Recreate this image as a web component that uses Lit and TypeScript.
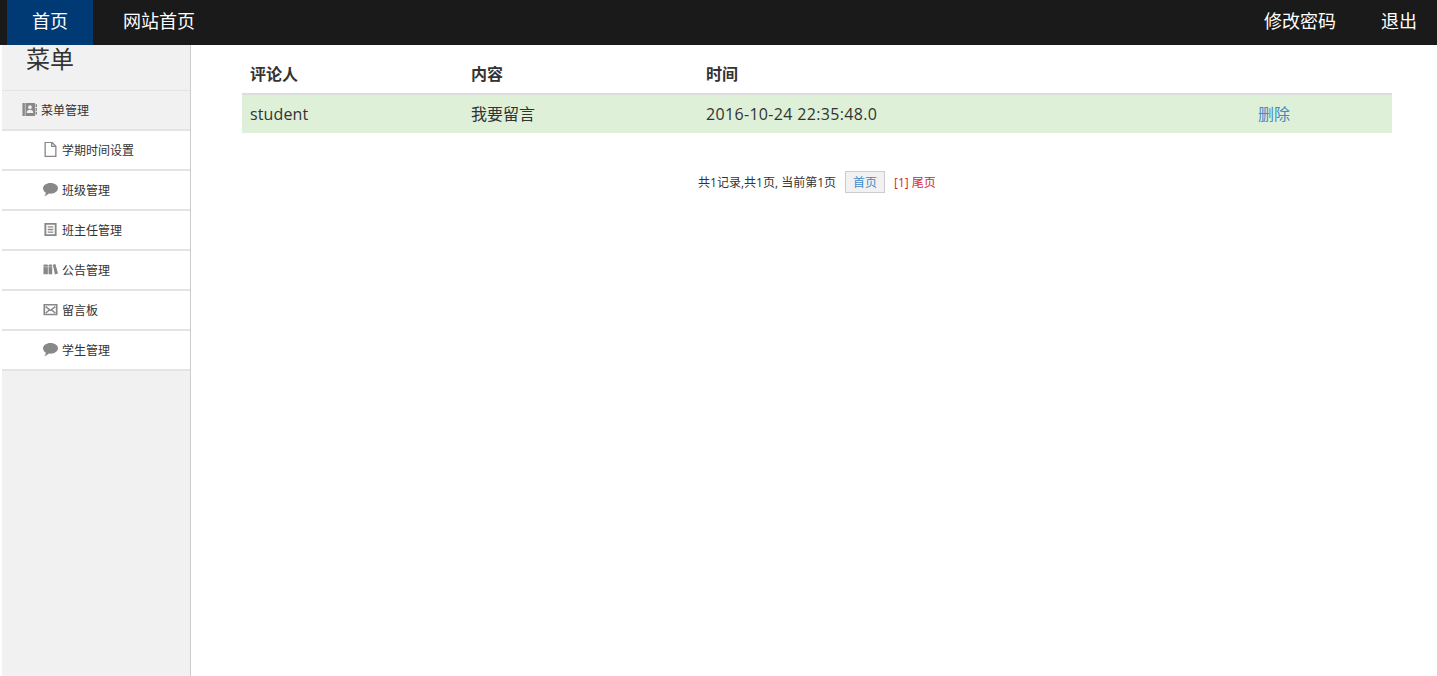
import { LitElement, html, css, svg } from "lit";
import { customElement } from "lit/decorators.js";

const icons: Record<string, unknown> = {
  contact: svg`<path fill-rule="evenodd" d="M.5 1h12.700a.8.8 0 0 1 .8.8v12.400a.8.8 0 0 1-.8.8H.5zM8.500 3.500a2 2 0 1 0 0 4 2 2 0 0 0 0-4zM5 11.800h7c0-2.300-1.400-3.500-3.500-3.500S5 9.500 5 11.800z"/><path fill="#d8d8d8" d="M3 1h.8v14H3z"/><path d="M14.500 2.500H16v2.700h-1.500zM14.500 6.500H16v2.700h-1.500zM14.500 10.500H16v2.700h-1.500z"/>`,
  file: svg`<path d="M2.300.3h7.200l4.200 4.200v10.900H2.300z M9.300.3v4.400h4.400" fill="none" stroke="currentColor" stroke-width="1.400"/>`,
  comment: svg`<path d="M8 1c4.400 0 8 2.500 8 5.700S12.400 12.400 8 12.400c-.6 0-1.200 0-1.700-.1C5.100 13.600 3.400 14.600 1.400 15c1-1.100 1.600-2.200 1.700-3.500C1.200 10.400 0 8.700 0 6.700 0 3.500 3.600 1 8 1z"/>`,
  list: svg`<path fill-rule="evenodd" d="M1.500 1h13v14h-13zM3.500 3v10h9V3zM5 4.500h6v1.400H5zM5 7.300h6v1.400H5zM5 10.100h6v1.400H5z"/>`,
  books: svg`<path d="M.5 3.500c0-.5.4-.8 1-.8h2.800c.6 0 .9.300.9.800V13H.5zM5.900 3.500c0-.5.4-.8 1-.8h2c.6 0 .9.300.9.800V13H5.900zM10.500 3l2.700-.8L16 12.200l-3.300 1z"/><path fill="#fff" opacity=".55" d="M.5 4.800h4.700v.8H.5zM5.900 4.800h3.900v.8H5.900z"/>`,
  mail: svg`<path fill-rule="evenodd" d="M.5 2h15v12.200H.5zM2.300 3.800v8.600h11.400V3.800zM3.400 4.300 8 7.900l4.600-3.600 1 1.200-3.500 2.700 3.500 2.900-1 1.200L8.900 9.200 8 9.900l-.9-.7-3.700 3.100-1-1.200 3.500-2.900-3.500-2.700z"/>`,
};

const menu = [
  ["file", "学期时间设置"],
  ["comment", "班级管理"],
  ["list", "班主任管理"],
  ["books", "公告管理"],
  ["mail", "留言板"],
  ["comment", "学生管理"],
];

@customElement("app-root")
export class AppRoot extends LitElement {
  static styles = css`
    :host {
      display: flex;
      flex-direction: column;
      height: 676px;
      overflow: hidden;
      background: #fff;
      color: #333;
      font-family: "Open Sans", "Noto Sans CJK SC", sans-serif;
      font-size: 16px;
    }
    .nav {
      flex: none;
      height: 45px;
      display: flex;
      align-items: stretch;
      justify-content: space-between;
      background: #1a1a1a;
      color: #fff;
      font-size: 18px;
      line-height: 43px;
      padding: 0 20px 0 7px;
    }
    .nav-group {
      display: flex;
    }
    .home {
      width: 86px;
      text-align: center;
      background: #003a75;
    }
    .site {
      margin-left: 30px;
    }
    .right {
      gap: 45px;
    }
    .body {
      flex: 1;
      display: flex;
      min-height: 0;
    }
    .side {
      flex: none;
      width: 188px;
      margin-left: 2px;
      background: #f1f1f1;
      border-right: 1px solid #ccc;
    }
    .title {
      height: 46px;
      box-sizing: border-box;
      padding-left: 24px;
      font-size: 24px;
      line-height: 28px;
      border-bottom: 1px solid #e4e4e4;
    }
    .group,
    .item {
      display: flex;
      align-items: center;
      font-size: 12px;
      color: #333;
      box-sizing: border-box;
      border-bottom: 2px solid #e4e4e4;
      height: 40px;
      gap: 4px;
    }
    .group {
      padding-left: 20px;
    }
    .item {
      background: #fff;
      padding-left: 41px;
    }
    .icon {
      width: 15px;
      height: 15px;
      flex: none;
      fill: #888;
      color: #888;
      margin-bottom: 1px;
    }
    .main {
      flex: 1;
      min-width: 0;
      padding: 10px 0 0 51px;
    }
    .table {
      width: 1150px;
    }
    .row {
      display: grid;
      grid-template-columns: 221px 235px 552px 1fr;
      padding-left: 8px;
      box-sizing: border-box;
      align-items: center;
    }
    .head {
      height: 40px;
      padding-bottom: 2px;
      font-weight: 700;
      border-bottom: 2px solid #ddd;
    }
    .data {
      height: 38px;
      background: #dff0d8;
    }
    .name {
      letter-spacing: 0.14px;
    }
    .date {
      letter-spacing: 0.33px;
    }
    .cjk {
      padding-bottom: 2px;
    }
    .link {
      color: #428bca;
    }
    .pager {
      display: flex;
      align-items: center;
      justify-content: center;
      margin-top: 38px;
      margin-right: 45px;
      font-size: 12px;
      height: 22px;
    }
    .first {
      margin: 0 9px;
      width: 40px;
      height: 22px;
      box-sizing: border-box;
      display: flex;
      align-items: center;
      justify-content: center;
      border: 1px solid #ccc;
      background: #f1f1f1;
      color: #428bca;
    }
    .red {
      color: #d9232e;
    }
  `;

  private icon(name: string) {
    return html`<svg class="icon" viewBox="0 0 16 16">${icons[name]}</svg>`;
  }

  render() {
    return html`
      <div class="nav">
        <div class="nav-group">
          <div class="home">首页</div>
          <div class="site">网站首页</div>
        </div>
        <div class="nav-group right">
          <div>修改密码</div>
          <div>退出</div>
        </div>
      </div>
      <div class="body">
        <aside class="side">
          <div class="title">菜单</div>
          <div class="group">${this.icon("contact")}<span>菜单管理</span></div>
          ${menu.map(([i, t]) => html`<div class="item">${this.icon(i)}<span>${t}</span></div>`)}
        </aside>
        <main class="main">
          <div class="table">
            <div class="row head"><span>评论人</span><span>内容</span><span>时间</span><span></span></div>
            <div class="row data">
              <span class="name">student</span><span class="cjk">我要留言</span><span class="date">2016-10-24 22:35:48.0</span>
              <span class="link cjk">删除</span>
            </div>
          </div>
          <div class="pager">
            <span>共1记录,共1页, 当前第1页</span>
            <span class="first">首页</span>
            <span class="red">[1] 尾页</span>
          </div>
        </main>
      </div>
    `;
  }
}
